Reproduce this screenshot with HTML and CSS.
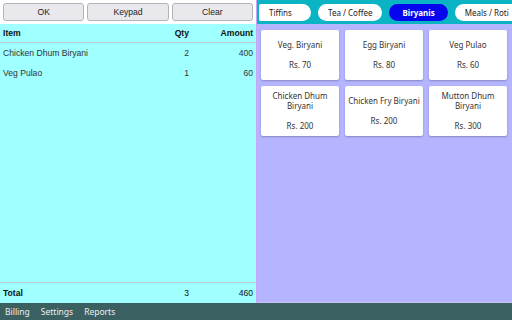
FILE: index.html
```html
<!DOCTYPE html>
<html lang="en">
<head>
    <meta charset="UTF-8">
    <title>Billing</title>
    <link rel="stylesheet" href="styles.css">
</head>
<body>
    <div class="main">
        <div class="bill-panel">
            <div class="toolbar">
                <button>OK</button>
                <button>Keypad</button>
                <button>Clear</button>
            </div>
            <div class="bill">
                <div class="row head">
                    <span class="item">Item</span>
                    <span class="qty">Qty</span>
                    <span class="amt">Amount</span>
                </div>
                <div class="row">
                    <span class="item">Chicken Dhum Biryani</span>
                    <span class="qty">2</span>
                    <span class="amt">400</span>
                </div>
                <div class="row">
                    <span class="item">Veg Pulao</span>
                    <span class="qty">1</span>
                    <span class="amt">60</span>
                </div>
                <div class="spacer"></div>
                <div class="row total">
                    <span class="item">Total</span>
                    <span class="qty">3</span>
                    <span class="amt">460</span>
                </div>
            </div>
        </div>
        <div class="menu-panel">
            <div class="tabs">
                <span class="tab">Tiffins</span>
                <span class="tab">Tea / Coffee</span>
                <span class="tab active">Biryanis</span>
                <span class="tab">Meals / Roti</span>
            </div>
            <div class="cards">
                <div class="card"><div>Veg. Biryani</div><div class="price">Rs. 70</div></div>
                <div class="card"><div>Egg Biryani</div><div class="price">Rs. 80</div></div>
                <div class="card"><div>Veg Pulao</div><div class="price">Rs. 60</div></div>
                <div class="card"><div>Chicken Dhum<br>Biryani</div><div class="price">Rs. 200</div></div>
                <div class="card"><div>Chicken Fry Biryani</div><div class="price">Rs. 200</div></div>
                <div class="card"><div>Mutton Dhum<br>Biryani</div><div class="price">Rs. 300</div></div>
            </div>
        </div>
    </div>
    <div class="nav">
        <span>Billing</span>
        <span>Settings</span>
        <span>Reports</span>
    </div>
</body>
</html>
```

FILE: styles.css
```css
body {
    margin: 0;
    width: 512px;
    height: 320px;
    display: flex;
    flex-direction: column;
    overflow: hidden;
    font-family: 'Liberation Sans', Arial, sans-serif;
}
.main {
    flex: 1;
    display: flex;
    min-height: 0;
}
.bill-panel {
    width: 256px;
    flex-shrink: 0;
    display: flex;
    flex-direction: column;
}
.toolbar {
    background: #fff;
    display: flex;
    gap: 3px;
    padding: 3px;
    height: 18px;
}
.toolbar button {
    flex: 1;
    background: #e9e9ed;
    border: 1px solid #b4b4b8;
    border-radius: 3px;
    font-family: 'Liberation Sans', Arial, sans-serif;
    font-size: 8.6px;
    color: #222;
    padding: 0;
}
.bill {
    flex: 1;
    background: #a0ffff;
    display: flex;
    flex-direction: column;
}
.row {
    display: flex;
    align-items: center;
    height: 20px;
    padding: 0 3px;
    font-size: 8.6px;
    color: #333;
}
.row.head {
    height: 18px;
    border-bottom: 1px solid #b8d0d0;
    font-weight: bold;
    color: #111;
}
.row.total {
    height: 20px;
    border-top: 1px solid #b8d0d0;
    font-weight: bold;
    color: #111;
}
.total .qty, .total .amt {
    font-weight: normal;
}
.item {
    flex: 1;
}
.qty {
    width: 30px;
    text-align: right;
}
.amt {
    width: 64px;
    text-align: right;
}
.spacer {
    flex: 1;
}
.menu-panel {
    flex: 1;
    min-width: 0;
    display: flex;
    flex-direction: column;
    background: #b4b4ff;
    border-left: 1px solid #c4a8f4;
    border-bottom: 1px solid #c8c0f4;
    font-family: 'Noto Sans', sans-serif;
}
.tabs {
    background: #0ab4c4;
    height: 24px;
    display: flex;
    align-items: center;
    gap: 7px;
    padding-left: 2px;
    overflow: hidden;
    white-space: nowrap;
}
.tab {
    flex-shrink: 0;
    background: #fff;
    border-radius: 9px;
    height: 17px;
    line-height: 17px;
    font-size: 8px;
    color: #222;
    padding: 0 10px;
}
.tab:first-child {
    width: 32px;
    border-radius: 2px 9px 9px 2px;
}
.tab.active {
    background: #0505f0;
    color: #fff;
    font-weight: bold;
    padding: 0 13px;
}
.cards {
    display: grid;
    grid-template-columns: repeat(3, 78px);
    grid-auto-rows: 50px;
    gap: 6px;
    padding: 6px 4px;
}
.card {
    background: #fff;
    border-radius: 2px;
    box-shadow: 0 1px 2px rgba(0, 0, 0, 0.25);
    display: flex;
    flex-direction: column;
    justify-content: center;
    align-items: center;
    text-align: center;
    font-size: 8px;
    line-height: 10px;
    color: #333;
}
.card .price {
    margin-top: 10px;
}
.nav {
    height: 17px;
    background: #3b6062;
    display: flex;
    align-items: center;
    gap: 11px;
    padding-left: 5px;
    font-family: 'Noto Sans', sans-serif;
    font-size: 8.5px;
    color: #eee;
}
```
